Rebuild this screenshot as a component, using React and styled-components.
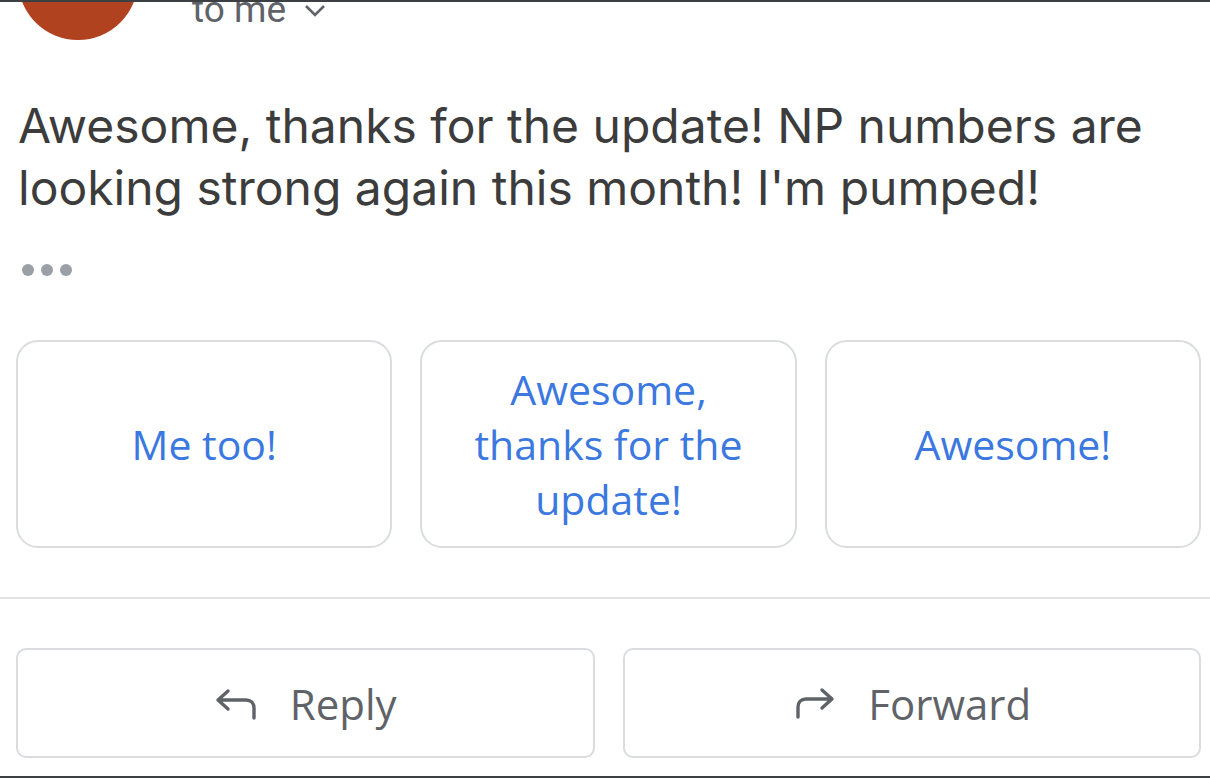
import React from 'react';
import styled, { createGlobalStyle } from 'styled-components';

const GlobalStyle = createGlobalStyle`
  html, body {
    margin: 0;
    padding: 0;
    background: #ffffff;
  }
`;

const suggestions = ['Me too!', 'Awesome, thanks for the update!', 'Awesome!'];

const Screen = styled.div`
  box-sizing: border-box;
  height: 778px;
  overflow: hidden;
  border-top: 2px solid #3c4043;
  border-bottom: 2px solid #3c4043;
  padding: 0 9px 0 16px;
  background: #fff;
`;

const Header = styled.div`
  display: flex;
  align-items: flex-start;
  height: 38px;
  overflow: hidden;
`;

const Avatar = styled.div`
  flex: none;
  width: 120px;
  height: 120px;
  margin: -82px 0 0 2px;
  border-radius: 50%;
  background: #b1421f;
`;

const Recipient = styled.div`
  display: flex;
  align-items: center;
  gap: 18px;
  margin: -14px 0 0 54px;
  font-family: Roboto, 'Liberation Sans', sans-serif;
  font-size: 37px;
  line-height: 44px;
  color: #5f6368;
`;

const Body = styled.p`
  margin: 55px 0 0 2px;
  font-family: Inter, Roboto, 'Liberation Sans', sans-serif;
  font-size: 48px;
  line-height: 62px;
  color: #3c3c3c;
`;

const Dots = styled.div`
  display: flex;
  gap: 7px;
  margin: 45px 0 0 6px;
`;

const Dot = styled.span`
  width: 12px;
  height: 12px;
  border-radius: 50%;
  background: #9aa0a6;
`;

const Chips = styled.div`
  display: grid;
  grid-template-columns: repeat(3, 1fr);
  gap: 28px;
  margin-top: 64px;
`;

const Chip = styled.button`
  box-sizing: border-box;
  height: 208px;
  padding: 0 40px;
  border: 2px solid #dadce0;
  border-radius: 22px;
  background: #fff;
  font-family: 'Open Sans', Roboto, sans-serif;
  font-size: 41px;
  font-weight: 500;
  line-height: 55px;
  color: #3b78e0;
  text-align: center;
`;

const Divider = styled.hr`
  margin: 49px -9px 0 -16px;
  border: 0;
  border-top: 2px solid #e3e3e6;
`;

const Actions = styled.div`
  display: grid;
  grid-template-columns: 1fr 1fr;
  gap: 28px;
  margin-top: 49px;
`;

const ActionButton = styled.button`
  box-sizing: border-box;
  height: 110px;
  display: flex;
  align-items: center;
  justify-content: center;
  gap: 30px;
  border: 2px solid #dadce0;
  border-radius: 10px;
  background: #fff;
  font-family: 'Open Sans', Roboto, sans-serif;
  font-size: 42px;
  font-weight: 500;
  color: #5f6368;

  svg {
    flex: none;
  }
`;

const Chevron = () => (
  <svg width="22" height="14" viewBox="0 0 22 14">
    <path d="M2 3l9 9 9-9" fill="none" stroke="#5f6368" strokeWidth="2.6" />
  </svg>
);

const ReplyIcon = () => (
  <svg width="46" height="34" viewBox="0 0 46 34">
    <path
      d="M14 5L4 14l10 9M4 14h28c5 0 8 3 8 8v10"
      fill="none"
      stroke="#5f6368"
      strokeWidth="3.4"
      strokeLinecap="round"
      strokeLinejoin="round"
    />
  </svg>
);

const ForwardIcon = () => (
  <svg width="46" height="34" viewBox="0 0 46 34">
    <path
      d="M30 4l10 9-10 9M40 13H14c-5 0-8 3-8 8v10"
      fill="none"
      stroke="#5f6368"
      strokeWidth="3.4"
      strokeLinecap="round"
      strokeLinejoin="round"
    />
  </svg>
);

const App = () => (
  <Screen>
    <GlobalStyle />
    <Header>
      <Avatar />
      <Recipient>
        to me
        <Chevron />
      </Recipient>
    </Header>

    <Body>
      Awesome, thanks for the update! NP numbers are looking strong again this month! I'm pumped!
    </Body>

    <Dots>
      <Dot />
      <Dot />
      <Dot />
    </Dots>

    <Chips>
      {suggestions.map((text, i) => (
        <Chip key={i}>{text}</Chip>
      ))}
    </Chips>

    <Divider />

    <Actions>
      <ActionButton>
        <ReplyIcon />
        Reply
      </ActionButton>
      <ActionButton>
        <ForwardIcon />
        Forward
      </ActionButton>
    </Actions>
  </Screen>
);

export default App;
